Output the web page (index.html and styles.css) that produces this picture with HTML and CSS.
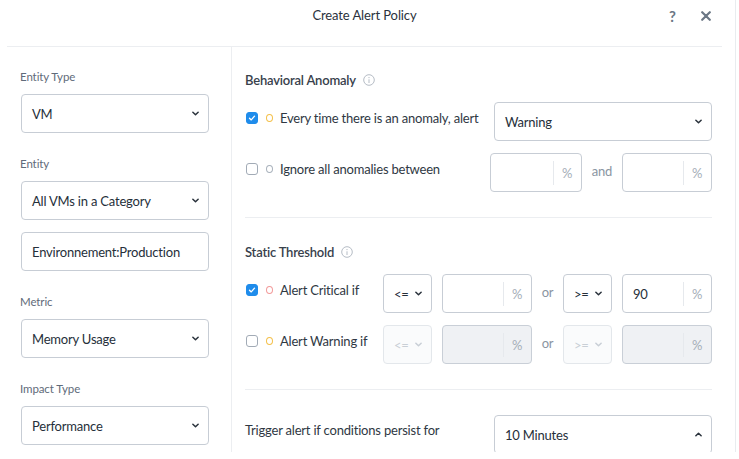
FILE: index.html
```html
<!DOCTYPE html>
<html>
<head>
<meta charset="utf-8">
<link rel="stylesheet" href="styles.css">
</head>
<body>
<div class="modal">
  <header class="hdr">
    <div></div>
    <div class="title">Create Alert Policy</div>
    <div class="hdr-actions">
      <span class="help">?</span>
      <svg class="close" width="10" height="10" viewBox="0 0 10 10"><path d="M1.2 1.2 L8.8 8.8 M8.8 1.2 L1.2 8.8" stroke="#6b7785" stroke-width="2.2" stroke-linecap="round"/></svg>
    </div>
  </header>
  <div class="body">
    <aside class="side">
      <div class="field">
        <div class="lbl">Entity Type</div>
        <div class="select"><span>VM</span><svg class="chev" viewBox="0 0 8 5"><path d="M1 1 L4 4 L7 1"/></svg></div>
      </div>
      <div class="field">
        <div class="lbl">Entity</div>
        <div class="select"><span>All VMs in a Category</span><svg class="chev" viewBox="0 0 8 5"><path d="M1 1 L4 4 L7 1"/></svg></div>
        <div class="textbox">Environnement:Production</div>
      </div>
      <div class="field">
        <div class="lbl">Metric</div>
        <div class="select"><span>Memory Usage</span><svg class="chev" viewBox="0 0 8 5"><path d="M1 1 L4 4 L7 1"/></svg></div>
      </div>
      <div class="field">
        <div class="lbl">Impact Type</div>
        <div class="select"><span>Performance</span><svg class="chev" viewBox="0 0 8 5"><path d="M1 1 L4 4 L7 1"/></svg></div>
      </div>
    </aside>
    <main class="main">
      <section class="sec">
        <h3 class="sec-title">Behavioral Anomaly <svg class="info" viewBox="0 0 12 12"><circle cx="6" cy="6" r="5.3" fill="none" stroke="#b5bcc5" stroke-width="1"/><circle cx="6" cy="3.6" r="0.7" fill="#b5bcc5"/><path d="M6 5.3 V9" stroke="#b5bcc5" stroke-width="1"/></svg></h3>
        <div class="row">
          <div class="opt w-anom1"><span class="cb on"><svg viewBox="0 0 12 12"><path d="M3 6.2 L5.1 8.3 L9 3.8" fill="none" stroke="#fff" stroke-width="1.6" stroke-linecap="round" stroke-linejoin="round"/></svg></span><span class="dot yellow"></span><span class="txt">Every time there is an anomaly, alert</span></div>
          <div class="select wide"><span>Warning</span><svg class="chev" viewBox="0 0 8 5"><path d="M1 1 L4 4 L7 1"/></svg></div>
        </div>
        <div class="row">
          <div class="opt w-anom2"><span class="cb"></span><span class="dot gray"></span><span class="txt">Ignore all anomalies between</span></div>
          <div class="inp w92"><span class="val"></span><span class="sfx">%</span></div>
          <div class="conj w40">and</div>
          <div class="inp w90"><span class="val"></span><span class="sfx">%</span></div>
        </div>
      </section>
      <hr class="div">
      <section class="sec">
        <h3 class="sec-title">Static Threshold <svg class="info" viewBox="0 0 12 12"><circle cx="6" cy="6" r="5.3" fill="none" stroke="#b5bcc5" stroke-width="1"/><circle cx="6" cy="3.6" r="0.7" fill="#b5bcc5"/><path d="M6 5.3 V9" stroke="#b5bcc5" stroke-width="1"/></svg></h3>
        <div class="row">
          <div class="opt w-thr"><span class="cb on"><svg viewBox="0 0 12 12"><path d="M3 6.2 L5.1 8.3 L9 3.8" fill="none" stroke="#fff" stroke-width="1.6" stroke-linecap="round" stroke-linejoin="round"/></svg></span><span class="dot red"></span><span class="txt">Alert Critical if</span></div>
          <div class="select small"><span>&lt;=</span><svg class="chev" viewBox="0 0 8 5"><path d="M1 1 L4 4 L7 1"/></svg></div>
          <div class="inp w90 ml10"><span class="val"></span><span class="sfx">%</span></div>
          <div class="conj w31">or</div>
          <div class="select small"><span>&gt;=</span><svg class="chev" viewBox="0 0 8 5"><path d="M1 1 L4 4 L7 1"/></svg></div>
          <div class="inp w90 ml10"><span class="val">90</span><span class="sfx">%</span></div>
        </div>
        <div class="row">
          <div class="opt w-thr"><span class="cb"></span><span class="dot yellow"></span><span class="txt">Alert Warning if</span></div>
          <div class="select small disabled"><span>&lt;=</span><svg class="chev" viewBox="0 0 8 5"><path d="M1 1 L4 4 L7 1"/></svg></div>
          <div class="inp w90 ml10 disabled"><span class="val"></span><span class="sfx">%</span></div>
          <div class="conj w31">or</div>
          <div class="select small disabled"><span>&gt;=</span><svg class="chev" viewBox="0 0 8 5"><path d="M1 1 L4 4 L7 1"/></svg></div>
          <div class="inp w90 ml10 disabled"><span class="val"></span><span class="sfx">%</span></div>
        </div>
      </section>
      <hr class="div">
      <section class="sec trig">
        <div class="row">
          <div class="opt w-anom1 plain"><span class="txt">Trigger alert if conditions persist for</span></div>
          <div class="select wide"><span>10 Minutes</span><svg class="chev up" viewBox="0 0 8 5"><path d="M1 4 L4 1 L7 4"/></svg></div>
        </div>
      </section>
    </main>
  </div>
</div>
</body>
</html>
```
FILE: styles.css
```css
* { box-sizing: border-box; }
html, body { margin: 0; padding: 0; background: #fff; }
body {
  font-family: Lato, "Liberation Sans", sans-serif;
  font-size: 13px;
  letter-spacing: -0.2px;
  color: #262f3a;
}
.modal {
  width: 736px;
  height: 452px;
  border-right: 1px solid #e9ecef;
  display: flex;
  flex-direction: column;
}
.hdr {
  height: 47px;
  margin: 0 13px 0 7px;
  border-bottom: 1px solid #eceef1;
  display: grid;
  grid-template-columns: 1fr auto 1fr;
  align-items: start;
}
.title {
  padding-top: 6px;
  line-height: 18px;
  font-size: 13px;
  letter-spacing: -0.1px;
  color: #2a323c;
}
.hdr-actions {
  justify-self: end;
  display: flex;
  align-items: center;
  gap: 25px;
  padding-top: 7px;
  padding-right: 11px;
  height: 18px;
  box-sizing: content-box;
}
.help {
  font-weight: 700;
  font-size: 15px;
  color: #6b7785;
  line-height: 18px;
  letter-spacing: 0;
}
.close { width: 10px; height: 10px; display: block; }

.body {
  flex: 1;
  display: flex;
  overflow: hidden;
}
.side {
  width: 232px;
  flex: none;
  border-right: 1px solid #eceef1;
  padding: 22px 22px 0 21px;
}
.field { margin-bottom: 23px; }
.lbl {
  font-size: 11.5px;
  letter-spacing: -0.1px;
  line-height: 16px;
  color: #5f6b7a;
  margin-bottom: 9px;
  margin-left: -1px;
}
.select, .textbox, .inp {
  height: 39px;
  border: 1px solid #c7cdd5;
  border-radius: 4px;
  background: #fff;
}
.select {
  display: flex;
  align-items: center;
  justify-content: space-between;
  padding: 0 9px 0 10px;
}
.textbox {
  margin-top: 12px;
  display: flex;
  align-items: center;
  padding-left: 10px;
}
.chev {
  width: 7px;
  height: 5px;
  display: block;
  fill: none;
  stroke: #2a323c;
  stroke-width: 1.7;
  stroke-linecap: round;
  stroke-linejoin: round;
}
.main {
  flex: 1;
  padding: 24px 23px 0 13px;
}
.sec-title {
  margin: 0 0 13px;
  font-size: 13px;
  line-height: 18px;
  font-weight: 600;
  color: #38414c;
  display: flex;
  align-items: center;
  gap: 7px;
}
.info { width: 12px; height: 12px; display: block; }
.row {
  display: flex;
  align-items: flex-start;
  margin-bottom: 12px;
}
.row:last-child { margin-bottom: 0; }
.opt {
  display: flex;
  align-items: center;
  height: 18px;
  margin-top: 7px;
  flex: none;
}
.w-anom1 { width: 249px; }
.w-anom2 { width: 245px; }
.w-thr { width: 138px; }
.cb {
  width: 12px;
  height: 12px;
  margin-left: 1px;
  border: 1.3px solid #a2abb6;
  border-radius: 3px;
  flex: none;
}
.cb svg { display: block; width: 100%; height: 100%; }
.cb.on {
  background: #1f8ceb;
  border-color: #1f8ceb;
}
.dot {
  width: 7px;
  height: 8px;
  border-radius: 50%;
  border: 1.2px solid;
  margin-left: 8px;
  margin-right: 7px;
  flex: none;
}
.dot.yellow { border-color: #f4c04a; }
.dot.red { border-color: #f29a9a; }
.dot.gray { border-color: #a9b2bc; }
.txt { color: #2f3843; white-space: nowrap; }
.plain .txt { margin-top: -1px; }
.wide { flex: 1; }
.select.small { width: 49px; padding: 0 9px 0 10px; }
.inp {
  display: flex;
  align-items: stretch;
}
.inp .val {
  flex: 1;
  display: flex;
  align-items: center;
  padding-left: 10px;
}
.inp .sfx {
  position: relative;
  width: 28px;
  display: flex;
  align-items: center;
  justify-content: center;
  color: #a5aeb8;
  font-size: 13px;
  padding-top: 1px;
}
.inp .sfx::before {
  content: "";
  position: absolute;
  left: 0;
  top: 7px;
  bottom: 6px;
  width: 1px;
  background: #e6e9ed;
}
.w92 { width: 92px; }
.w90 { width: 90px; }
.ml10 { margin-left: 10px; }
.conj {
  height: 39px;
  display: flex;
  align-items: center;
  justify-content: center;
  color: #8a95a2;
  padding-bottom: 4px;
}
.w40 { width: 40px; }
.w31 { width: 31px; }
.select.disabled {
  background: #fafbfc;
  border-color: #e3e7eb;
  color: #c9cfd6;
}
.select.disabled .chev { stroke: #c9cfd6; }
.inp.disabled {
  background: #eff1f4;
  border-color: #c9cfd7;
}
.div {
  border: 0;
  border-top: 1px solid #eceef1;
  margin: 25px 0 25px;
  height: 0;
}
.trig .opt { margin-top: 6px; }
```
